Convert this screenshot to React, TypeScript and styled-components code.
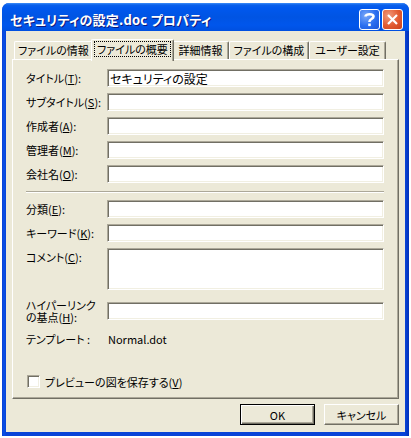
import React from "react";
import styled, { createGlobalStyle } from "styled-components";

const GlobalStyle = createGlobalStyle`
  html, body {
    margin: 0;
    padding: 0;
    background: #ffffff;
  }
  body {
    font-family: "Noto Sans CJK JP", "Noto Sans", sans-serif;
    font-size: 11px;
    font-feature-settings: "palt";
    color: #000;
  }
`;

const Window = styled.div`
  margin: 3px 0 0 2px;
  width: 407px;
  height: 433px;
  box-sizing: border-box;
  display: flex;
  flex-direction: column;
  border-radius: 7px 7px 0 0;
  overflow: hidden;
  background: linear-gradient(to right, #0840d6 0px, #0a50e6 2px, #0843d8 4px, #0843d8 calc(100% - 4px), #0030b8 100%);
  padding: 0 4px 4px;
`;

const TitleBar = styled.div`
  height: 28px;
  margin: 0 -4px;
  padding: 4px 6px 0 8px;
  box-sizing: border-box;
  display: flex;
  align-items: center;
  background: linear-gradient(
    to bottom,
    #3d8ef9 0px,
    #0a5fea 2px,
    #0058ee 5px,
    #0054e3 14px,
    #0056ec 22px,
    #0050e0 28px
  );
`;

const Title = styled.div`
  flex: 1;
  color: #ffffff;
  font-size: 13px;
  font-weight: bold;
  letter-spacing: 0.2px;
  text-shadow: 1px 1px #0a1a80;
  white-space: nowrap;
`;

const CaptionButton = styled.div<{ $kind: "help" | "close" }>`
  width: 21px;
  height: 21px;
  box-sizing: border-box;
  margin-left: 2px;
  border: 1px solid #ffffff;
  border-radius: 3px;
  display: flex;
  align-items: center;
  justify-content: center;
  background: ${(p) =>
    p.$kind === "close"
      ? "radial-gradient(circle at 30% 30%, #f19a7c, #e25a30 55%, #c9411b)"
      : "radial-gradient(circle at 30% 30%, #7aa8f8, #2a6ef0 55%, #1a55d8)"};
`;

const Client = styled.div`
  flex: 1;
  background: #ece9d8;
  padding: 8px 6px 7px;
  display: flex;
  flex-direction: column;
`;

const TabStrip = styled.div`
  height: 20px;
  display: flex;
  align-items: flex-end;
  padding-left: 2px;
`;

const Tab = styled.div<{ $w: number; $active?: boolean }>`
  position: relative;
  box-sizing: border-box;
  width: ${(p) => p.$w}px;
  height: ${(p) => (p.$active ? 22 : 18)}px;
  margin: ${(p) => (p.$active ? "0 -2px -2px" : "0")};
  z-index: ${(p) => (p.$active ? 2 : 1)};
  background: #ece9d8;
  border-top: 1px solid #ffffff;
  border-left: 1px solid #ffffff;
  border-right: 1px solid #716f64;
  box-shadow: inset -1px 0 #aca899;
  border-radius: 2px 2px 0 0;
  display: flex;
  justify-content: center;
  padding-top: ${(p) => (p.$active ? 2 : 1)}px;
  white-space: nowrap;
  line-height: 14px;
`;

const FocusText = styled.span`
  outline: 1px dotted #000;
  padding: 0 2px;
  height: 14px;
`;

const Panel = styled.div`
  height: 340px;
  box-sizing: border-box;
  border: 1px solid;
  border-color: #ffffff #716f64 #716f64 #ffffff;
  box-shadow: inset -1px -1px #aca899;
  padding: 9px 14px 0 13px;
  display: flex;
  flex-direction: column;
`;

const Row = styled.div<{ $top: number; $align?: string }>`
  display: flex;
  align-items: ${(p) => p.$align || "center"};
  margin-top: ${(p) => p.$top}px;
`;

const Label = styled.div<{ $pad?: number }>`
  width: 81px;
  flex: none;
  line-height: 12px;
  white-space: nowrap;
  padding-top: ${(p) => p.$pad || 0}px;
`;

const Field = styled.input`
  flex: 1;
  min-width: 0;
  height: 18px;
  box-sizing: border-box;
  margin: 0;
  padding: 0 2px;
  background: #ffffff;
  border: 1px solid;
  border-color: #aca899 #ffffff #ffffff #aca899;
  box-shadow: inset 1px 1px #716f64, inset -1px -1px #f1efe2;
  font: inherit;
  font-size: 12px;
  color: #000;
  outline: none;
`;

const Memo = styled.textarea`
  flex: 1;
  height: 42px;
  box-sizing: border-box;
  margin: 0;
  padding: 1px 2px;
  resize: none;
  background: #ffffff;
  border: 1px solid;
  border-color: #aca899 #ffffff #ffffff #aca899;
  box-shadow: inset 1px 1px #716f64, inset -1px -1px #f1efe2;
  font: inherit;
  outline: none;
`;

const Separator = styled.div`
  height: 0;
  border-top: 1px solid #aca899;
  border-bottom: 1px solid #ffffff;
  margin-top: 8px;
`;

const Value = styled.div`
  line-height: 12px;
  padding-left: 1px;
`;

const CheckRow = styled.label`
  display: flex;
  align-items: center;
  gap: 5px;
  margin-top: 30px;
  padding-left: 1px;
  line-height: 12px;
`;

const CheckBox = styled.span`
  width: 13px;
  height: 13px;
  box-sizing: border-box;
  background: #ffffff;
  border: 1px solid;
  border-color: #aca899 #ffffff #ffffff #aca899;
  box-shadow: inset 1px 1px #716f64, inset -1px -1px #f1efe2;
`;

const ButtonRow = styled.div`
  display: flex;
  justify-content: flex-end;
  gap: 9px;
  margin-top: 5px;
`;

const Button = styled.div<{ $default?: boolean }>`
  width: 75px;
  height: 21px;
  box-sizing: border-box;
  background: #ece9d8;
  display: flex;
  align-items: center;
  justify-content: center;
  border: 1px solid;
  border-color: ${(p) =>
    p.$default ? "#000000" : "#ffffff #716f64 #716f64 #ffffff"};
  box-shadow: ${(p) =>
    p.$default
      ? "inset 1px 1px #ffffff, inset -1px -1px #716f64, inset -2px -2px #aca899"
      : "inset -1px -1px #aca899"};
  line-height: 12px;
`;

const rowsTop: [string, string][] = [
  ["タイトル", "T"],
  ["サブタイトル", "S"],
  ["作成者", "A"],
  ["管理者", "M"],
  ["会社名", "O"],
];

export default function App() {
  return (
    <>
      <GlobalStyle />
      <Window>
        <TitleBar>
          <Title>セキュリティの設定.doc プロパティ</Title>
          <CaptionButton $kind="help">
            <svg width="13" height="15" viewBox="0 0 13 15">
              <path
                d="M2.5 4.5 C2.5 1.5 10.5 1.5 10.5 4.5 C10.5 7 6.5 7 6.5 9.5 L6.5 10"
                fill="none"
                stroke="#fff"
                strokeWidth="2.6"
              />
              <rect x="5.2" y="11.5" width="2.6" height="2.6" fill="#fff" />
            </svg>
          </CaptionButton>
          <CaptionButton $kind="close">
            <svg width="13" height="13" viewBox="0 0 13 13">
              <path d="M2 2 L11 11 M11 2 L2 11" stroke="#fff" strokeWidth="2.2" />
            </svg>
          </CaptionButton>
        </TitleBar>
        <Client>
          <TabStrip>
            <Tab $w={79}>ファイルの情報</Tab>
            <Tab $w={83} $active>
              <FocusText>ファイルの概要</FocusText>
            </Tab>
            <Tab $w={57}>詳細情報</Tab>
            <Tab $w={80}>ファイルの構成</Tab>
            <Tab $w={77}>ユーザー設定</Tab>
          </TabStrip>
          <Panel>
            {rowsTop.map(([name, key], i) => (
              <Row key={key} $top={i === 0 ? 0 : 6}>
                <Label>
                  {name}(<u>{key}</u>):
                </Label>
                <Field readOnly value={i === 0 ? "セキュリティの設定" : ""} />
              </Row>
            ))}
            <Separator />
            <Row $top={7}>
              <Label>
                分類(<u>E</u>):
              </Label>
              <Field readOnly value="" />
            </Row>
            <Row $top={6}>
              <Label>
                キーワード(<u>K</u>):
              </Label>
              <Field readOnly value="" />
            </Row>
            <Row $top={6} $align="flex-start">
              <Label $pad={3}>
                コメント(<u>C</u>):
              </Label>
              <Memo readOnly value="" />
            </Row>
            <Row $top={9}>
              <Label>
                ハイパーリンク
                <br />
                の基点(<u>H</u>):
              </Label>
              <Field readOnly value="" />
            </Row>
            <Row $top={10}>
              <Label>テンプレート :</Label>
              <Value>Normal.dot</Value>
            </Row>
            <CheckRow>
              <CheckBox />
              <span>
                プレビューの図を保存する(<u>V</u>)
              </span>
            </CheckRow>
          </Panel>
          <ButtonRow>
            <Button $default>OK</Button>
            <Button>キャンセル</Button>
          </ButtonRow>
        </Client>
      </Window>
    </>
  );
}
